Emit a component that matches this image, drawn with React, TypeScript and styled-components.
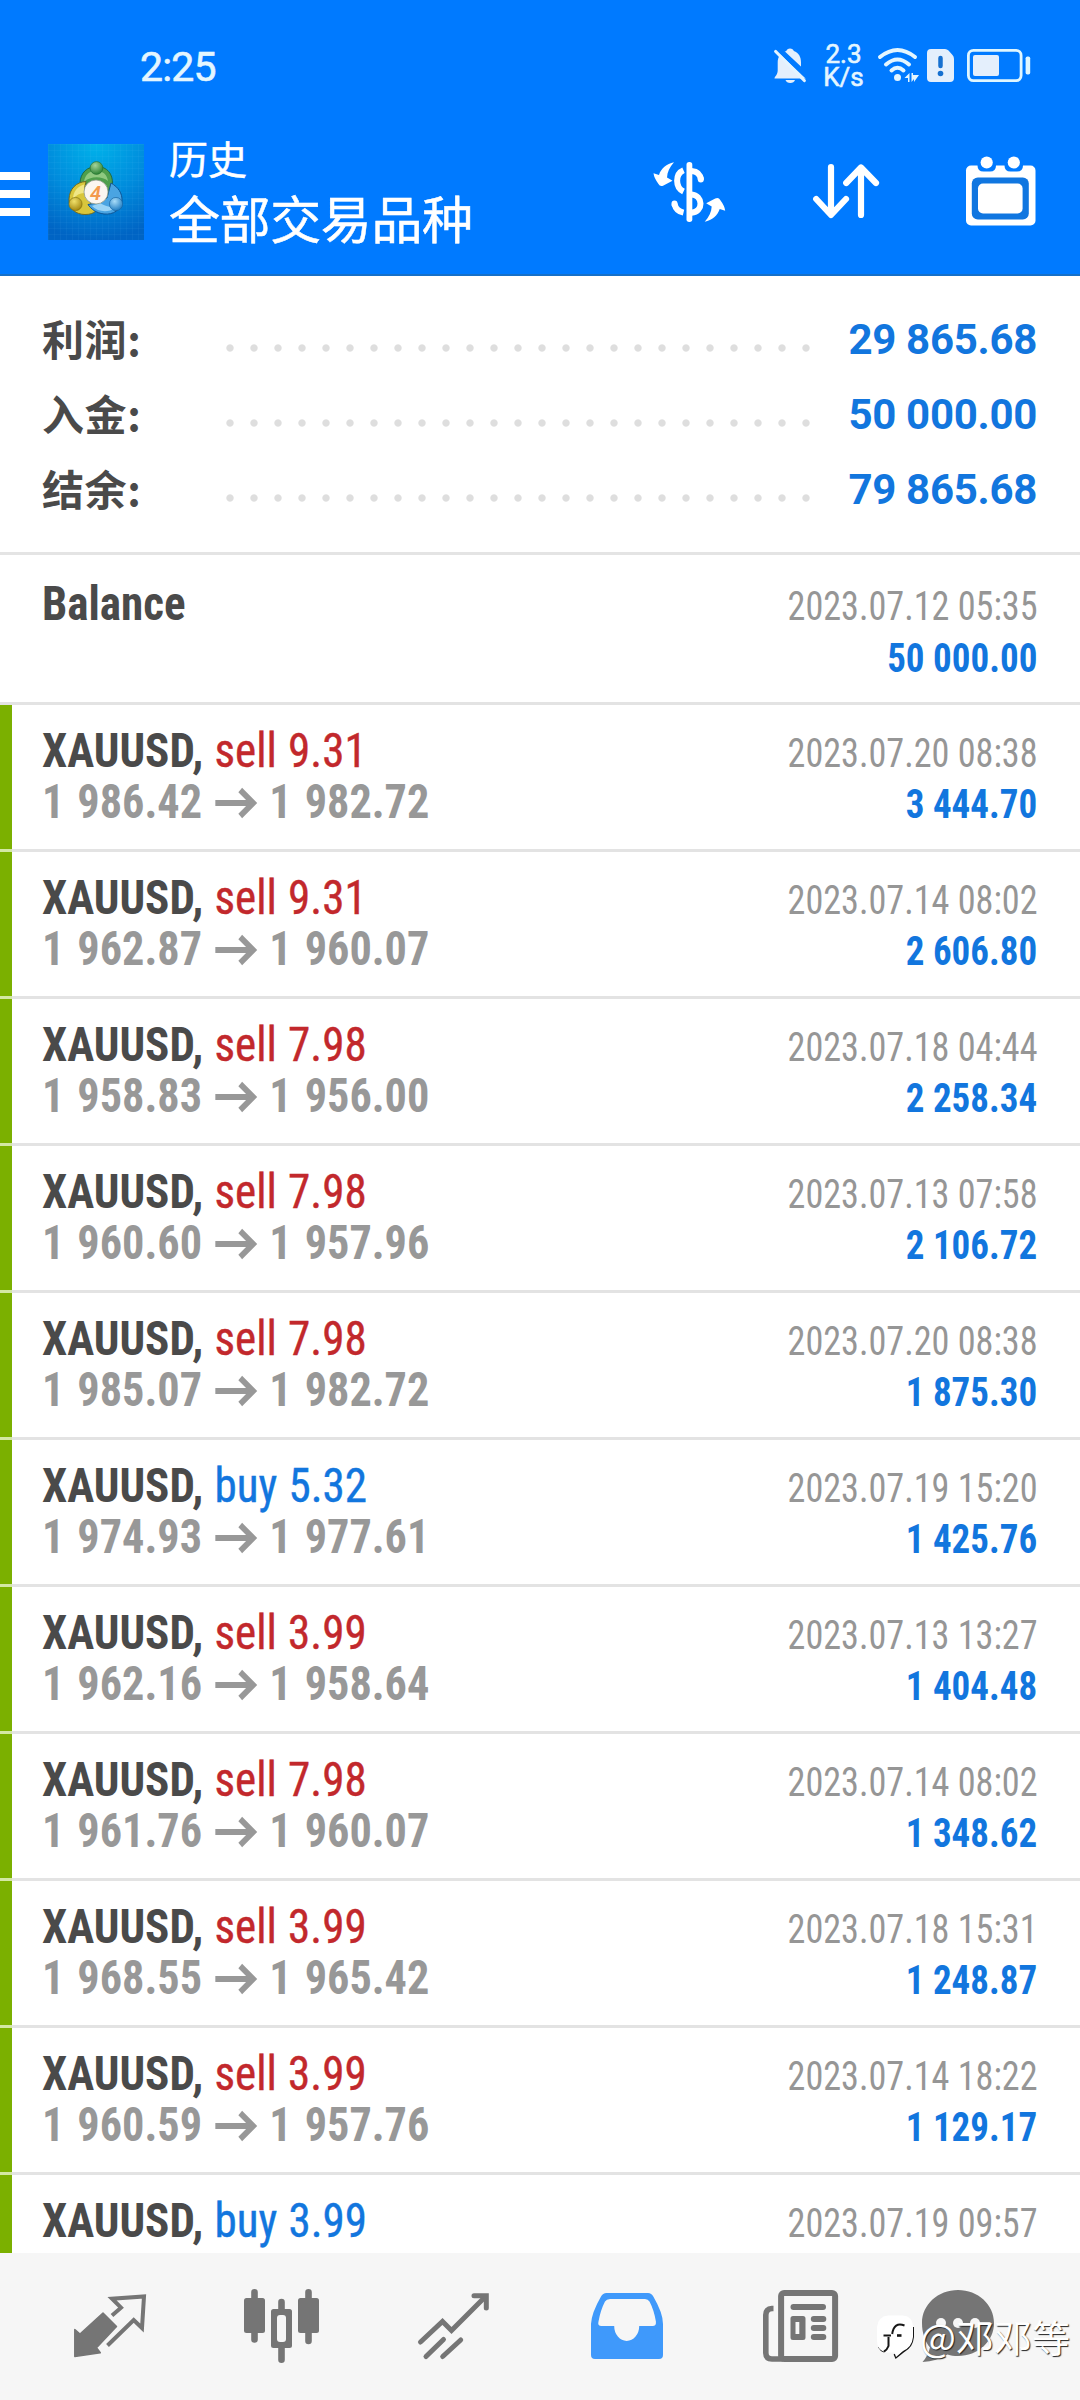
import React from 'react';
import styled, { createGlobalStyle } from 'styled-components';

const SANS = "Roboto, 'Noto Sans CJK SC', sans-serif";
const CJK = "'Noto Sans CJK SC', sans-serif";
const CONDENSED = "'Roboto Condensed', Roboto, sans-serif";

const GlobalStyle = createGlobalStyle`
  * { box-sizing: border-box; }
  body { margin: 0; background: #fff; }
  svg { display: block; flex: none; overflow: visible; }
`;

const Screen = styled.div`
  position: relative;
  width: 1080px;
  height: 2400px;
  display: flex;
  flex-direction: column;
  overflow: hidden;
  background: #fff;
  font-family: ${SANS};
`;

const Header = styled.header`
  flex: none;
  height: 276px;
  background: #007aff;
  border-bottom: 2px solid #1670c8;
  color: #fff;
`;

const StatusBar = styled.div`
  height: 130px;
  padding: 0 50px 0 140px;
  display: flex;
  align-items: center;
  justify-content: space-between;
  color: #e4f6ff;
`;

const Clock = styled.div`
  font-size: 41px;
  font-weight: 400;
  -webkit-text-stroke: 0.6px currentColor;
  line-height: 48px;
  letter-spacing: -0.8px;
  padding-top: 4px;
`;

const StatusIcons = styled.div`
  display: flex;
  align-items: center;
`;

const NetSpeed = styled.div`
  width: 37px;
  margin: 1px 16px 0 19px;
  display: flex;
  flex-direction: column;
  align-items: center;
  font-size: 26px;
  line-height: 22.5px;
  -webkit-text-stroke: 0.6px currentColor;
`;

const Toolbar = styled.div`
  height: 124px;
  display: flex;
  align-items: center;
`;

const MenuButton = styled.div`
  width: 30px;
  display: flex;
  flex-direction: column;
  gap: 10px;
  margin: 4px 18px 0 0;
`;

const MenuLine = styled.span`
  height: 8px;
  background: #fff;
`;

const Titles = styled.div`
  flex: 1;
  padding: 0 0 4px 25px;
  display: flex;
  flex-direction: column;
  font-family: ${CJK};
  -webkit-text-stroke: 0.5px currentColor;
`;

const Subtitle = styled.div`
  font-size: 39px;
  line-height: 54px;
`;

const Title = styled.div`
  font-size: 51px;
  line-height: 66px;
  letter-spacing: -0.4px;
`;

const ToolbarIcons = styled.div`
  display: flex;
  align-items: center;
  gap: 87px;
  padding: 0 44px 1px 0;
`;

const Summary = styled.section`
  flex: none;
  height: 279px;
  padding: 27px 43px 0 42px;
  border-bottom: 3px solid #e4e4e4;
`;

const SummaryRow = styled.div`
  height: 75px;
  display: flex;
  align-items: center;
`;

const SummaryLabel = styled.div`
  width: 180px;
  padding-bottom: 6px;
  font-family: ${CJK};
  font-weight: 700;
  font-size: 42px;
  line-height: 60px;
  letter-spacing: 0.6px;
  color: #4a4a4a;
`;

const Leader = styled.div`
  width: 600px;
  height: 8px;
  margin-top: 15px;
  background: radial-gradient(circle at 8px 4px, #dedede 3.2px, transparent 4.1px) 0 0 / 24px 8px repeat-x;
`;

const SummaryValue = styled.div`
  flex: 1;
  display: flex;
  justify-content: flex-end;
  padding-bottom: 2px;
  font-weight: 700;
  font-size: 42px;
  line-height: 60px;
  letter-spacing: -0.3px;
  color: #1276de;
  white-space: nowrap;
`;

const List = styled.main`
  flex: 1;
  min-height: 0;
  overflow: hidden;
`;

const Deal = styled.article<{ $balance?: boolean }>`
  height: ${(p) => (p.$balance ? 150 : 147)}px;
  padding: ${(p) => (p.$balance ? 23 : 20)}px 42.5px 0 30px;
  border-left: 12px solid ${(p) => (p.$balance ? '#fff' : '#7bb000')};
  background: linear-gradient(#e3e3e3, #e3e3e3) bottom / 100% 3px no-repeat;
`;

const GapLine = styled.div<{ $tinted?: boolean }>`
  position: relative;
  width: 12px;
  height: 3px;
  margin-top: -3px;
  background: ${(p) => (p.$tinted ? '#d3e8a4' : '#e3e3e3')};
`;

const Line = styled.div`
  height: 51px;
  display: flex;
  justify-content: space-between;
  align-items: baseline;
  font-family: ${CONDENSED};
  line-height: 51px;
  white-space: nowrap;
`;

const Left = styled.div<{ $muted?: boolean }>`
  font-size: 48px;
  font-weight: 700;
  color: ${(p) => (p.$muted ? '#989898' : '#4a4a4a')};
  word-spacing: ${(p) => (p.$muted ? 3 : 1)}px;
  transform: scaleX(${(p) => (p.$muted ? 0.922 : 0.938)});
  transform-origin: left;
`;

const Side = styled.span<{ $buy: boolean }>`
  font-weight: 400;
  -webkit-text-stroke: 0.4px currentColor;
  color: ${(p) => (p.$buy ? '#1276de' : '#c2282c')};
`;

const Arrow = styled.span`
  display: inline-block;
  margin: 0 13px 0 14px;
`;

const Right = styled.div<{ $strong?: boolean }>`
  font-size: 40px;
  font-weight: ${(p) => (p.$strong ? 700 : 400)};
  color: ${(p) => (p.$strong ? '#1276de' : '#969696')};
  transform: scaleX(${(p) => (p.$strong ? 0.925 : 0.904)});
  transform-origin: right;
`;

const BalanceAmount = styled.div`
  height: 51px;
  padding-top: 3.5px;
  display: flex;
  justify-content: flex-end;
  font-family: ${CONDENSED};
  line-height: 51px;
`;

const Nav = styled.nav`
  flex: none;
  height: 147px;
  padding: 0 51px 2px 24px;
  background: #f6f6f6;
  display: grid;
  grid-template-columns: 172px 171px 173px 173px 174px 142px;
  align-items: center;
  justify-items: center;
  color: #757575;
`;

const Watermark = styled.div`
  position: absolute;
  left: 877px;
  top: 2309px;
  height: 56px;
  display: flex;
  align-items: center;
  gap: 6px;
  color: #fff;
  font-family: ${CJK};
  font-weight: 400;
  font-size: 38px;
  line-height: 56px;
  white-space: nowrap;
  text-shadow: 1px 1px 1px #222;
`;

const WatermarkName = styled.span`
  padding-bottom: 3px;
`;

const AppLogo = () => (
  <svg width="96" height="96" viewBox="48 144 96 96">
    <defs>
      <radialGradient id="sky" cx="50%" cy="0%" r="100%">
        <stop offset="0" stopColor="#00b2ea" />
        <stop offset="0.55" stopColor="#008bdc" />
        <stop offset="1" stopColor="#0064c4" />
      </radialGradient>
      <pattern id="grid" x="48" y="144" width="6" height="6" patternUnits="userSpaceOnUse">
        <path d="M0 0H6M0 0V6" stroke="#7fd4ff" strokeOpacity="0.1" strokeWidth="1" />
      </pattern>
      <radialGradient id="gBall" cx="40%" cy="30%" r="70%">
        <stop offset="0" stopColor="#a5d39a" /><stop offset="1" stopColor="#2d8434" />
      </radialGradient>
      <radialGradient id="yBall" cx="40%" cy="30%" r="70%">
        <stop offset="0" stopColor="#f0e06a" /><stop offset="1" stopColor="#a68a12" />
      </radialGradient>
      <radialGradient id="bBall" cx="40%" cy="30%" r="70%">
        <stop offset="0" stopColor="#a8dcf8" /><stop offset="1" stopColor="#2480c4" />
      </radialGradient>
    </defs>
    <rect x="48" y="144" width="96" height="96" fill="url(#sky)" />
    <rect x="48" y="144" width="96" height="96" fill="url(#grid)" />
    <path fill="#4f9f4c" stroke="#1f6b46" strokeWidth="1" d="M80 184C80 172 88 166.500 97 166.500C107 166.500 113 174 112.500 184C112 191 110 196 107 199L96 192L86 184z" />
    <path fill="#8fc980" d="M84 182C85 174 90 171 96.500 171C103 171 107 174.500 108 181C102 176 90 176 84 182z" />
    <path fill="#d8c63c" stroke="#6e6a22" strokeWidth="1" d="M86 181.500C76 182 69.500 189 69 199C69 209 76 214.500 85 214.500C90 214.500 93 213.500 96 211L90 202L84 192z" />
    <path fill="#f0e685" d="M84 184.500C77 187 73 192 73 199C76 195 80 193 84 193z" />
    <path fill="#4aa4e2" stroke="#0d5596" strokeWidth="1" d="M111 183C118 187 122.500 193 122 201C121 210 113 215 104 214C96 213 91 209 88 204.500L97 203L107 198z" />
    <path fill="#9ad4f6" d="M92 206C98 212 108 213 115 208C109 207 103 205 100 203z" />
    <circle cx="96.500" cy="168" r="6.400" fill="url(#gBall)" stroke="#1f6b30" strokeWidth="0.6" />
    <circle cx="75.500" cy="204" r="6.600" fill="url(#yBall)" stroke="#77680e" strokeWidth="0.6" />
    <circle cx="116" cy="204" r="6.600" fill="url(#bBall)" stroke="#15609c" strokeWidth="0.6" />
    <circle cx="96" cy="192" r="12" fill="#fbf6f0" stroke="#8e9a8c" strokeWidth="0.8" />
    <text x="95.500" y="199.500" textAnchor="middle" fontFamily="Roboto, sans-serif" fontSize="20" fontStyle="italic" fontWeight="600" fill="#f39a4c">4</text>
  </svg>
);

const BellOff = () => (
  <svg width="32" height="35" viewBox="774 48.5 32 35">
    <path fill="#e4effc" d="M790 49c2 0 3.400 1.200 3.800 2.600c5 1.800 7.200 6 7.200 11.400V71l5 8H774.500c0-2 3.200-3.500 3.200-8V63c0-5.500 3-10 8.600-11.400C786.800 50.200 788 49 790 49zM785.500 80.500H795c-.6 2-2.400 3-4.700 3s-4.200-1-4.800-3z" />
    <path d="M776 48L808 78.500" stroke="#007aff" strokeWidth="4" />
    <path d="M777 46L808 75" stroke="#007aff" strokeWidth="2" />
    <path d="M775.700 52L804.300 81" stroke="#e4f4ff" strokeWidth="3.200" strokeLinecap="round" />
  </svg>
);

const Wifi = () => (
  <svg width="41" height="35" viewBox="878 48 41 35">
    <g fill="none" stroke="#e4f6ff" strokeWidth="4" strokeLinecap="round">
      <path d="M880 57Q897.500 43 915 57" />
      <path d="M886 64.500Q897.500 54.500 909 64.500" />
      <path d="M891.500 70.500Q897.500 65 903.500 70.500" />
    </g>
    <circle cx="897.500" cy="77.500" r="3.500" fill="#e4f6ff" />
    <path d="M904.500 78L909.500 73V82H908V78zM911.500 73H913V75H919L914 82V79L911.500 82z" fill="#e4f6ff" />
  </svg>
);

const SimSvg = styled.svg`
  margin-left: 8px;
`;

const BatterySvg = styled.svg`
  margin-left: 13px;
`;

const SimAlert = () => (
  <SimSvg width="27" height="33" viewBox="927 48 27 33">
    <path fill="#e4effc" d="M931 48H945Q947 48 948.500 49.500L952.500 54Q954 55.500 954 58V77a4 4 0 0 1-4 4H931a4 4 0 0 1-4-4V52a4 4 0 0 1 4-4z" />
    <path d="M940.500 57V65" stroke="#1670d0" strokeWidth="4.500" strokeLinecap="round" />
    <circle cx="940.500" cy="72.500" r="2.800" fill="#1670d0" />
  </SimSvg>
);

const Battery = () => (
  <BatterySvg width="63" height="33" viewBox="967 49 63 33">
    <rect x="968.400" y="50.400" width="52.700" height="30.200" rx="5" fill="none" stroke="#dff6ff" strokeWidth="2.800" />
    <rect x="973" y="55" width="26" height="21" rx="2" fill="#e4effc" />
    <rect x="1025.600" y="56.500" width="4.600" height="18" rx="1.800" fill="#dff6ff" />
  </BatterySvg>
);

const DollarSwap = () => (
  <svg width="73" height="60" viewBox="653.500 162 73 60">
    <rect x="687" y="162" width="5.800" height="60" rx="2.700" fill="#fff" />
    <g fill="none" stroke="#fff" strokeWidth="6">
      <path d="M692 171C698 171.500 701 174.500 701.500 180" />
      <path d="M701.300 178.500V179.500" strokeLinecap="round" />
      <path d="M684 170.300C675.500 174 675.500 187.500 684 191.500" />
      <path d="M692 194.500C703.500 195.500 704.500 211.500 692 212.800" />
      <path d="M675 204C676 208.500 679 211.500 684 212.700" />
      <path d="M675 203.500V204.500" strokeLinecap="round" />
    </g>
    <path fill="#fff" d="M674.500 162.300C670 167.500 667.800 172 667.500 177.500Q670 179 673 180.700L664 185.500Q660.500 187 659 184Q654.500 178 654 173.300L659.500 175C661.500 168.500 667 164 674.500 162.300z" />
    <path fill="#fff" d="M705.200 221.700C709.700 216.500 711.900 212 712.200 206.500Q709.700 205 706.700 203.300L715.700 198.500Q719.200 197 720.700 200Q725.200 206 725.700 210.700L720.200 209C718.200 215.500 712.700 220 705.200 221.700z" />
  </svg>
);

const SortArrows = () => (
  <svg width="66" height="55" viewBox="813 165 66 55">
    <g fill="none" stroke="#fff" strokeWidth="6.200" strokeLinecap="round" strokeLinejoin="round">
      <path d="M831 168V215.500M816.200 200L831 216L846 200" />
      <path d="M861 216V169M846.200 184L861 168.500L876 184" />
    </g>
  </svg>
);

const CalendarIcon = () => (
  <svg width="70" height="70" viewBox="966 156.500 70 70">
    <rect x="966" y="165" width="69.500" height="60" rx="5" fill="#fff" />
    <path fill="#007aff" d="M977.500 160H996V165Q996 171 990 171H983.500Q977.500 171 977.500 165zM1004.500 160H1023V165Q1023 171 1017 171H1010.500Q1004.500 171 1004.500 165z" />
    <circle cx="986.700" cy="162" r="6.100" fill="#fff" />
    <circle cx="1013.800" cy="162" r="6.100" fill="#fff" />
    <rect x="971.800" y="177" width="57" height="42" rx="6" fill="#1076e0" />
    <rect x="978" y="183" width="44.600" height="30" rx="5" fill="#fff" />
  </svg>
);

const QuotesIcon = () => (
  <svg width="72" height="64" viewBox="74 2294.500 72 64">
    <path fill="#757575" stroke="#757575" strokeWidth="1.500" strokeLinejoin="round" d="M74.800 2330L80 2334.500L103 2313.500L116.500 2327L96.500 2348.300L100.300 2353.300L74.800 2357z" />
    <path fill="none" stroke="#757575" strokeWidth="4" d="M112 2316L121 2308.200L112 2299.200L144 2297L142 2328.500L133.700 2320.500L107.500 2346" />
  </svg>
);

const CandlesIcon = () => (
  <svg width="75" height="74" viewBox="244 2289 75 74">
    <path stroke="#757575" strokeWidth="6.600" strokeLinecap="round" d="M254.500 2292.300V2339.500M308.500 2292.300V2341M281.500 2302V2359.700" />
    <rect x="244" y="2298" width="21" height="35" rx="2.500" fill="#757575" />
    <rect x="298" y="2298" width="21" height="35" rx="2.500" fill="#757575" />
    <rect x="271" y="2309" width="21" height="39" rx="2.500" fill="#757575" />
    <rect x="277" y="2315" width="9" height="27" rx="3" fill="#f6f6f6" />
  </svg>
);

const TrendIcon = () => (
  <svg width="71" height="66" viewBox="418 2292 71 66">
    <g fill="none" stroke="#757575" strokeWidth="5" strokeLinecap="round">
      <path d="M420.500 2341L442.500 2320.500L451.500 2329.500L485 2296" />
      <path d="M474 2294.700H486.300V2307" />
      <path d="M426 2355.500L443.500 2338.500M442.700 2355.500L460.700 2339" />
    </g>
  </svg>
);

const HistoryIcon = () => (
  <svg width="72" height="66" viewBox="590.500 2292 72 66">
    <path fill="#3f99fb" d="M606 2292H647.500Q651 2292 652.800 2295.500Q662.500 2312 662.500 2323V2354a4 4 0 0 1-4 4H594.500a4 4 0 0 1-4-4V2323Q591 2312 600.500 2295.500Q602.300 2292 606 2292z" />
    <path fill="#f6f6f6" d="M609.500 2298H644.500Q647.500 2298 649 2300.500Q653.500 2309 655.400 2320.500Q656 2325 652 2325H638.700a12.500 15 0 0 1-25 0H601Q597 2325 597.900 2321Q600 2309 604.500 2300.500Q606 2298 609.500 2298z" />
  </svg>
);

const NewsIcon = () => (
  <svg width="75" height="72" viewBox="762.500 2289 75 72">
    <g fill="none" stroke="#757575" strokeWidth="6">
      <rect x="780.600" y="2292" width="54" height="66" rx="3" />
      <path d="M773 2307.500H771.500Q765.300 2308 765.300 2314V2352Q765.500 2358 771.500 2358H783" strokeWidth="5.600" />
    </g>
    <g fill="#757575">
      <rect x="790" y="2303" width="35.500" height="6" rx="3" />
      <path fillRule="evenodd" d="M792.500 2315h10a2.500 2.500 0 0 1 2.500 2.500v19a2.500 2.500 0 0 1-2.500 2.500h-10a2.500 2.500 0 0 1-2.500-2.500v-19a2.500 2.500 0 0 1 2.500-2.500zM795 2321v12h3.800v-12z" />
      <rect x="810.300" y="2315" width="15.500" height="6" rx="3" />
      <rect x="810.300" y="2324" width="15.500" height="6" rx="3" />
      <rect x="810.300" y="2333" width="15.500" height="6" rx="3" />
    </g>
  </svg>
);

const ChatIcon = () => (
  <svg width="72" height="72" viewBox="922 2289 72 72">
    <path fill="#757575" d="M958 2289c20 0 36 14.500 36 33s-16 33-36 33c-4 0-7-.5-10.500-1.500Q937 2360 922.500 2361Q928 2355 930 2346.500C925 2340.500 922 2332 922 2322c0-18.500 16-33 36-33z" />
    <g fill="#f6f6f6">
      <circle cx="941" cy="2322" r="5" /><circle cx="958" cy="2322" r="5" /><circle cx="975" cy="2322" r="5" />
    </g>
  </svg>
);

const WatermarkLogo = () => (
  <svg width="37" height="44" viewBox="878 2319 37 44">
    <path fill="none" stroke="#161616" strokeWidth="2" d="M914 2331V2341Q913 2351 905 2355L897 2361.500L895.500 2358M880 2351Q882 2354.500 885 2355.500" />
    <path fill="#fff" d="M889 2319.500H904Q914 2320.500 914 2331V2341Q913 2351 904 2355L897 2361L895.500 2356.500H888Q878 2355 878 2345V2331Q879 2320.500 889 2319.500z" />
    <g fill="none" stroke="#161616" strokeWidth="2">
      <path d="M905.500 2329.500Q895 2325.500 893.200 2338" />
      <path d="M884.500 2339.500H892" />
      <path d="M889.500 2341V2350Q888 2354 885 2355.500" />
      <path d="M898 2339.500H902.500" strokeWidth="2.600" />
    </g>
  </svg>
);

interface DealData { side: 'buy' | 'sell'; volume: string; from: string; to: string; time: string; profit: string }

const deals: DealData[] = [
  { side: 'sell', volume: '9.31', from: '1 986.42', to: '1 982.72', time: '2023.07.20 08:38', profit: '3 444.70' },
  { side: 'sell', volume: '9.31', from: '1 962.87', to: '1 960.07', time: '2023.07.14 08:02', profit: '2 606.80' },
  { side: 'sell', volume: '7.98', from: '1 958.83', to: '1 956.00', time: '2023.07.18 04:44', profit: '2 258.34' },
  { side: 'sell', volume: '7.98', from: '1 960.60', to: '1 957.96', time: '2023.07.13 07:58', profit: '2 106.72' },
  { side: 'sell', volume: '7.98', from: '1 985.07', to: '1 982.72', time: '2023.07.20 08:38', profit: '1 875.30' },
  { side: 'buy', volume: '5.32', from: '1 974.93', to: '1 977.61', time: '2023.07.19 15:20', profit: '1 425.76' },
  { side: 'sell', volume: '3.99', from: '1 962.16', to: '1 958.64', time: '2023.07.13 13:27', profit: '1 404.48' },
  { side: 'sell', volume: '7.98', from: '1 961.76', to: '1 960.07', time: '2023.07.14 08:02', profit: '1 348.62' },
  { side: 'sell', volume: '3.99', from: '1 968.55', to: '1 965.42', time: '2023.07.18 15:31', profit: '1 248.87' },
  { side: 'sell', volume: '3.99', from: '1 960.59', to: '1 957.76', time: '2023.07.14 18:22', profit: '1 129.17' },
];

const summary = [
  ['利润', '29 865.68'],
  ['入金', '50 000.00'],
  ['结余', '79 865.68'],
];

const DealTitle = ({ side, volume, time }: Pick<DealData, 'side' | 'volume' | 'time'>) => (
  <Line>
    <Left>XAUUSD, <Side $buy={side === 'buy'}>{side} {volume}</Side></Left>
    <Right>{time}</Right>
  </Line>
);

export default function App() {
  return (
    <Screen>
      <GlobalStyle />
      <Header>
        <StatusBar>
          <Clock>2:25</Clock>
          <StatusIcons>
            <BellOff />
            <NetSpeed><span>2.3</span><span>K/s</span></NetSpeed>
            <Wifi />
            <SimAlert />
            <Battery />
          </StatusIcons>
        </StatusBar>
        <Toolbar>
          <MenuButton><MenuLine /><MenuLine /><MenuLine /></MenuButton>
          <AppLogo />
          <Titles>
            <Subtitle>历史</Subtitle>
            <Title>全部交易品种</Title>
          </Titles>
          <ToolbarIcons>
            <DollarSwap />
            <SortArrows />
            <CalendarIcon />
          </ToolbarIcons>
        </Toolbar>
      </Header>

      <Summary>
        {summary.map(([label, value]) => (
          <SummaryRow key={label}>
            <SummaryLabel>{label}:</SummaryLabel>
            <Leader />
            <SummaryValue>{value}</SummaryValue>
          </SummaryRow>
        ))}
      </Summary>

      <List>
        <Deal $balance>
          <Line><Left>Balance</Left><Right>2023.07.12 05:35</Right></Line>
          <BalanceAmount><Right $strong>50 000.00</Right></BalanceAmount>
        </Deal>
        <GapLine />
        {deals.map((d) => (
          <React.Fragment key={d.profit}>
            <Deal>
              <DealTitle side={d.side} volume={d.volume} time={d.time} />
              <Line>
                <Left $muted>
                  {d.from}
                  <Arrow>
                    <svg width="46" height="30" viewBox="0 0 46 30" fill="none" stroke="#989898" strokeWidth="6">
                      <path d="M0 15H40" />
                      <path d="M27 2L41 15L27 28" />
                    </svg>
                  </Arrow>
                  {d.to}
                </Left>
                <Right $strong>{d.profit}</Right>
              </Line>
            </Deal>
            <GapLine $tinted />
          </React.Fragment>
        ))}
        <Deal>
          <DealTitle side="buy" volume="3.99" time="2023.07.19 09:57" />
        </Deal>
      </List>

      <Nav>
        <QuotesIcon />
        <CandlesIcon />
        <TrendIcon />
        <HistoryIcon />
        <NewsIcon />
        <ChatIcon />
      </Nav>

      <Watermark>
        <WatermarkLogo />
        <WatermarkName>@邓邓等</WatermarkName>
      </Watermark>
    </Screen>
  );
}
